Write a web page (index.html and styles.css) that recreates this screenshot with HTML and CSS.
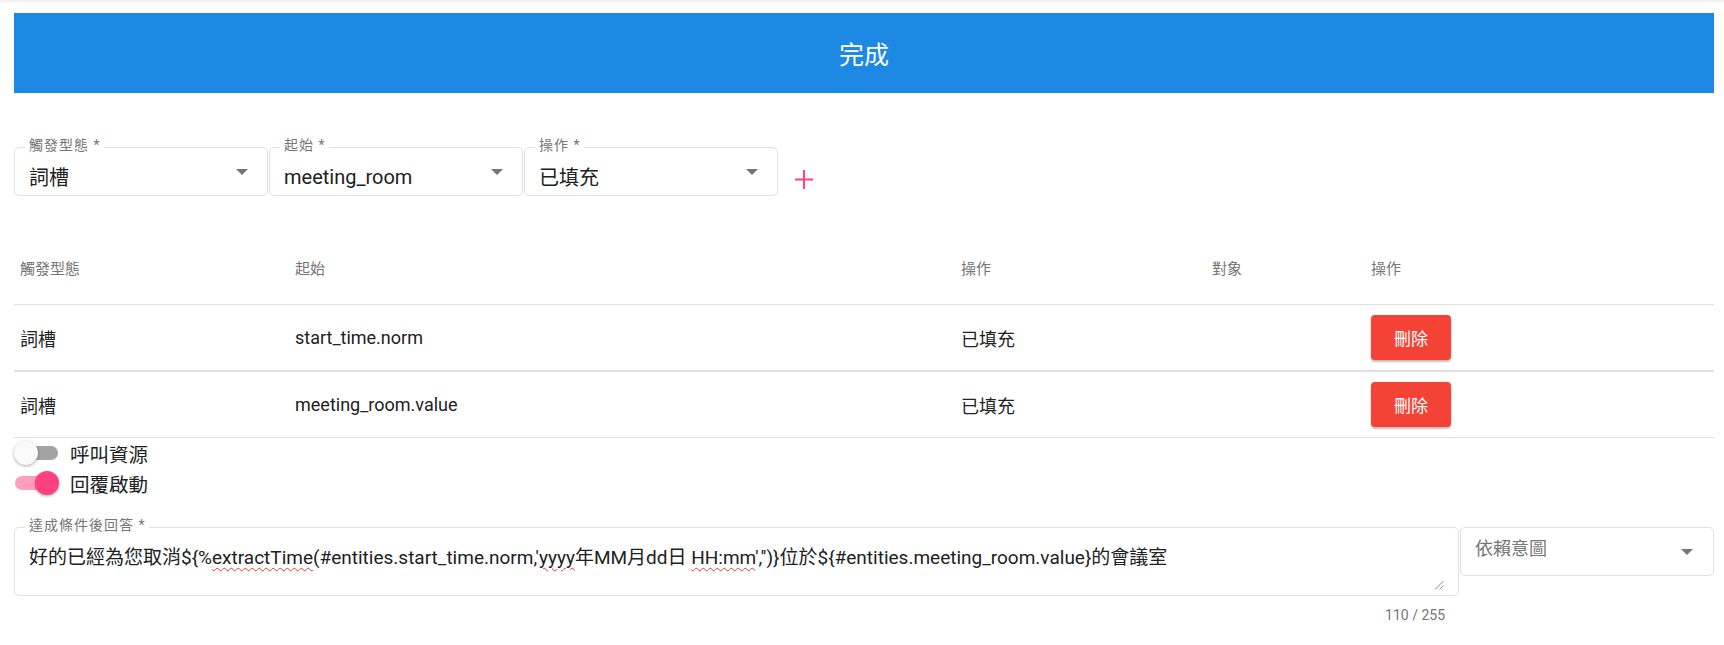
FILE: index.html
```html
<!DOCTYPE html>
<html lang="zh-Hant">
<head>
<meta charset="utf-8">
<title>完成</title>
<link rel="stylesheet" href="styles.css">
</head>
<body>
<div class="page">
  <header class="topbar">完成</header>

  <div class="filters">
    <div class="field select">
      <span class="flabel">觸發型態 *</span>
      <span class="value">詞槽</span>
      <span class="arrow"></span>
    </div>
    <div class="field select">
      <span class="flabel">起始 *</span>
      <span class="value">meeting_room</span>
      <span class="arrow"></span>
    </div>
    <div class="field select">
      <span class="flabel">操作 *</span>
      <span class="value">已填充</span>
      <span class="arrow"></span>
    </div>
    <button class="add" type="button" aria-label="新增">
      <svg width="18" height="19" viewBox="0 0 18 19"><path d="M9 0v19M0 9.5h18" stroke="#ff4081" stroke-width="2" fill="none"/></svg>
    </button>
  </div>

  <div class="rules">
    <div class="trow thead">
      <div class="cell">觸發型態</div>
      <div class="cell">起始</div>
      <div class="cell">操作</div>
      <div class="cell">對象</div>
      <div class="cell">操作</div>
    </div>
    <div class="trow tbody first">
      <div class="cell">詞槽</div>
      <div class="cell">start_time.norm</div>
      <div class="cell">已填充</div>
      <div class="cell"></div>
      <div class="cell"><button class="del" type="button">刪除</button></div>
    </div>
    <div class="trow tbody">
      <div class="cell">詞槽</div>
      <div class="cell">meeting_room.value</div>
      <div class="cell">已填充</div>
      <div class="cell"></div>
      <div class="cell"><button class="del" type="button">刪除</button></div>
    </div>
  </div>

  <div class="toggles">
    <label class="toggle">
      <span class="switch"><span class="track"></span><span class="thumb"></span></span>
      <span class="tlabel">呼叫資源</span>
    </label>
    <label class="toggle on">
      <span class="switch"><span class="track"></span><span class="thumb"></span></span>
      <span class="tlabel">回覆啟動</span>
    </label>
  </div>

  <div class="answer-row">
    <div class="answer-col">
      <div class="field area">
        <span class="flabel">達成條件後回答 *</span>
        <div class="areatext">好的已經為您取消${%<span class="sp">extractTime</span>(#entities.start_time.norm,'<span class="sp">yyyy</span>年MM月dd日 <span class="sp">HH:mm</span>','')}位於${#entities.meeting_room.value}的會議室</div>
        <svg class="resize" width="10" height="9" viewBox="0 0 10 9"><path d="M1 8.5L9.5 0M5.5 8.5L9.5 4.5" stroke="#8a8a8a" stroke-width="1" fill="none"/></svg>
      </div>
      <div class="counter">110 / 255</div>
    </div>
    <div class="field select intent">
      <span class="placeholder">依賴意圖</span>
      <span class="arrow"></span>
    </div>
  </div>
</div>
</body>
</html>
```

FILE: styles.css
```css
* { box-sizing: border-box; }

html, body { background: #fff; }

body {
  margin: 0;
  padding: 13px 10px 0 14px;
  font-family: Roboto, "Noto Sans CJK TC", sans-serif;
  color: #212121;
  background: linear-gradient(#efefef, #fff 4px);
}

.page { width: 1700px; }

.topbar {
  height: 80px;
  background: #1e88e5;
  color: #fff;
  font-size: 25px;
  display: flex;
  align-items: center;
  justify-content: center;
}

/* form fields */
.filters {
  margin-top: 54px;
  display: flex;
  gap: 1px;
  align-items: flex-start;
}

.field {
  position: relative;
  border: 1px solid #e0e0e0;
  border-radius: 5px;
  background: #fff;
}

.select {
  width: 254px;
  height: 49px;
  display: flex;
  align-items: center;
  padding: 0 19px 0 14px;
}

.flabel {
  position: absolute;
  top: -11px;
  left: 10px;
  padding: 0 3px 0 4px;
  background: #fff;
  font-size: 14px;
  letter-spacing: 1px;
  line-height: 16px;
  color: #757575;
  white-space: nowrap;
}

.value {
  font-size: 20px;
  margin-top: 10px;
  color: #212121;
}

.arrow {
  margin-left: auto;
  width: 0;
  height: 0;
  border-left: 6px solid transparent;
  border-right: 6px solid transparent;
  border-top: 6px solid #757575;
}

.add {
  margin: 23px 0 0 16px;
  padding: 0;
  border: 0;
  background: none;
  width: 18px;
  height: 19px;
  display: block;
}
.add svg { display: block; }

/* table */
.rules { margin-top: 34px; }

.trow {
  display: grid;
  grid-template-columns: 275px 666px 251px 159px 1fr;
  align-items: center;
  border-bottom: 1px solid #e0e0e0;
}

.cell { padding-left: 6px; }

.thead {
  height: 75px;
  font-size: 15px;
  color: #757575;
}

.tbody {
  height: 66px;
  font-size: 18px;
  color: #212121;
}

.tbody.first {
  height: 67px;
  border-bottom-width: 2px;
}

.del {
  width: 80px;
  height: 45px;
  border: 0;
  border-radius: 4px;
  background: #f44336;
  color: #fff;
  font-family: inherit;
  font-size: 17px;
  box-shadow: 0 2px 2px rgba(0,0,0,.24), 0 0 2px rgba(0,0,0,.12);
  display: block;
}

/* toggles */
.toggles { display: flex; flex-direction: column; }

.toggle {
  height: 30px;
  display: flex;
  align-items: center;
  gap: 11px;
}

.switch {
  position: relative;
  width: 45px;
  height: 24px;
  flex: none;
}

.track {
  position: absolute;
  left: 1px;
  right: 1px;
  top: 5px;
  height: 14px;
  border-radius: 7px;
  background: #a3a3a3;
}

.thumb {
  position: absolute;
  top: 0;
  left: 0;
  width: 24px;
  height: 24px;
  border-radius: 50%;
  background: #fafafa;
  box-shadow: 0 1px 3px rgba(0,0,0,.35);
}

.toggle.on .track { background: #ff9ebd; }
.toggle.on .thumb { left: 21px; background: #ff4081; }

.tlabel { font-size: 19.5px; color: #212121; }

/* answer */
.answer-row {
  margin-top: 29px;
  display: flex;
  gap: 1px;
  align-items: flex-start;
}

.answer-col { flex: 1; }

.area {
  height: 69px;
  padding: 18px 14px 0 14px;
}

.areatext {
  font-size: 19px;
  line-height: 24px;
  color: #212121;
  white-space: nowrap;
}

.sp {
  text-decoration: underline wavy #e53935;
  text-decoration-thickness: 1px;
  text-underline-offset: 3px;
}

.resize {
  position: absolute;
  right: 14px;
  bottom: 5px;
}

.counter {
  margin-top: 11px;
  padding-right: 14px;
  text-align: right;
  font-size: 14px;
  line-height: 16px;
  color: #757575;
}

.intent { padding-right: 20px; }

.placeholder {
  font-size: 18px;
  color: #757575;
  margin-top: -10px;
}
```
